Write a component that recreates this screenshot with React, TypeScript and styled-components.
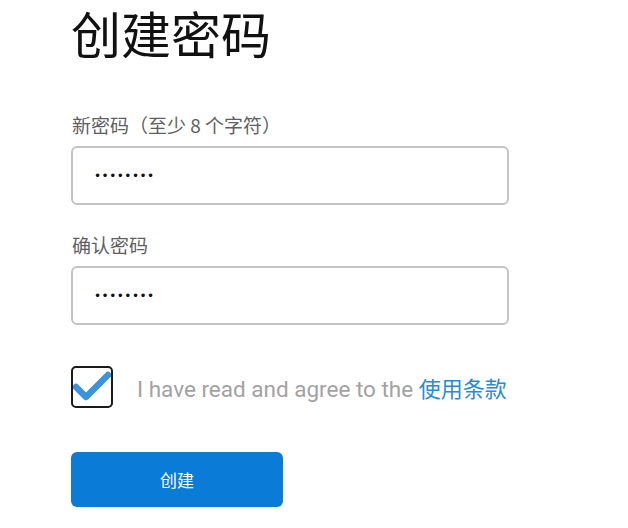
import styled, { createGlobalStyle } from "styled-components";

const GlobalStyle = createGlobalStyle`
  body {
    margin: 0;
    background: #ffffff;
    font-family: Roboto, "Noto Sans CJK SC", sans-serif;
  }
`;

const Page = styled.div`
  display: flex;
  flex-direction: column;
  padding: 2px 0 0 71px;
  width: 438px;
`;

const Title = styled.h1`
  margin: 0;
  font-family: "Noto Sans CJK SC", sans-serif;
  font-size: 50px;
  font-weight: 400;
  line-height: 60px;
  color: #111111;
`;

const Field = styled.div<{ $top: number }>`
  display: flex;
  flex-direction: column;
  gap: 9px;
  margin-top: ${(p) => p.$top}px;
`;

const Label = styled.label`
  font-family: "Noto Sans CJK SC", sans-serif;
  font-size: 19px;
  line-height: 24px;
  color: #5f5f5f;
  padding-left: 1px;
`;

const Input = styled.input`
  box-sizing: border-box;
  height: 59px;
  width: 100%;
  padding: 0 21px;
  border: 2px solid #c4c4c4;
  border-radius: 6px;
  font-family: "DejaVu Sans", sans-serif;
  font-size: 12px;
  letter-spacing: 0.5px;
  color: #111111;
  outline: none;
`;

const AgreeRow = styled.label`
  display: flex;
  align-items: center;
  gap: 24px;
  margin-top: 41px;
`;

const CheckBox = styled.span`
  box-sizing: border-box;
  display: flex;
  align-items: center;
  justify-content: center;
  width: 42px;
  height: 42px;
  border: 2.5px solid #1a1a1a;
  border-radius: 5px;
  overflow: visible;
`;

const AgreeText = styled.span`
  font-size: 22.5px;
  color: #a2a2a2;
`;

const Link = styled.a`
  font-family: "Noto Sans CJK SC", sans-serif;
  font-size: 22px;
  color: #2b8ad8;
  text-decoration: none;
`;

const Button = styled.button`
  margin-top: 44px;
  width: 212px;
  height: 55px;
  border: none;
  border-radius: 6px;
  background: #0a7cd8;
  color: #ffffff;
  font-family: "Noto Sans CJK SC", sans-serif;
  font-size: 17px;
  cursor: pointer;
`;

export default function App() {
  return (
    <>
      <GlobalStyle />
      <Page>
        <Title>创建密码</Title>
        <Field $top={51}>
          <Label>新密码（至少 8 个字符）</Label>
          <Input type="password" defaultValue="password" />
        </Field>
        <Field $top={28}>
          <Label>确认密码</Label>
          <Input type="password" defaultValue="password" />
        </Field>
        <AgreeRow>
          <CheckBox>
            <svg width="38" height="32" viewBox="0 0 38 32">
              <path
                d="M3 16 L13 26 L35 4"
                fill="none"
                stroke="#3a93de"
                strokeWidth="6.5"
                strokeLinecap="round"
                strokeLinejoin="round"
              />
            </svg>
          </CheckBox>
          <AgreeText>
            I have read and agree to the <Link href="#">使用条款</Link>
          </AgreeText>
        </AgreeRow>
        <Button>创建</Button>
      </Page>
    </>
  );
}
